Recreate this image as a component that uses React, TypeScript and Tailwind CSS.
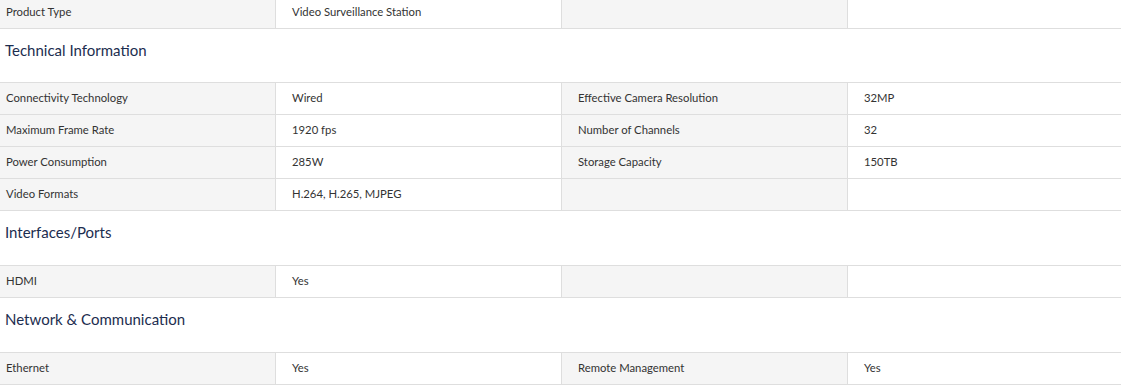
import React from "react";

type Row = [string, string, string?, string?];

interface Section {
  title?: string;
  rows: Row[];
}

const sections: Section[] = [
  { rows: [["Product Type", "Video Surveillance Station", "", ""]] },
  {
    title: "Technical Information",
    rows: [
      ["Connectivity Technology", "Wired", "Effective Camera Resolution", "32MP"],
      ["Maximum Frame Rate", "1920 fps", "Number of Channels", "32"],
      ["Power Consumption", "285W", "Storage Capacity", "150TB"],
      ["Video Formats", "H.264, H.265, MJPEG", "", ""],
    ],
  },
  { title: "Interfaces/Ports", rows: [["HDMI", "Yes", "", ""]] },
  {
    title: "Network & Communication",
    rows: [["Ethernet", "Yes", "Remote Management", "Yes"]],
  },
];

const SpecRow = ({ row }: { row: Row }) => (
  <div className="grid grid-cols-[286px_286px_286px_286px] border-b border-[#dedede] h-[32px]">
    {[0, 1, 2, 3].map((i) => (
      <div
        key={i}
        className={`flex items-center pl-4 text-[11.3px] text-[#333] ${
          i % 2 === 0 ? "bg-[#f5f5f5]" : "bg-white"
        } ${i < 3 ? "border-r border-[#dedede]" : ""}`}
      >
        {row[i] ?? ""}
      </div>
    ))}
  </div>
);

export default function App() {
  return (
    <div
      className="w-[1121px] h-[386px] overflow-hidden bg-white"
      style={{ fontFamily: "Lato, 'Open Sans', sans-serif" }}
    >
      <div className="-ml-[10px] -mt-[3px] w-[1144px]">
        {sections.map((s, si) => (
          <div key={si}>
            {s.title && (
              <div
                className={`${
                  si === 1 ? "h-[54px]" : "h-[55px]"
                } border-b border-[#dedede] pl-[15px] pt-[10px] text-[15px] text-[#1c2d4f]`}
              >
                {s.title}
              </div>
            )}
            {s.rows.map((r, ri) => (
              <SpecRow key={ri} row={r} />
            ))}
          </div>
        ))}
      </div>
    </div>
  );
}
